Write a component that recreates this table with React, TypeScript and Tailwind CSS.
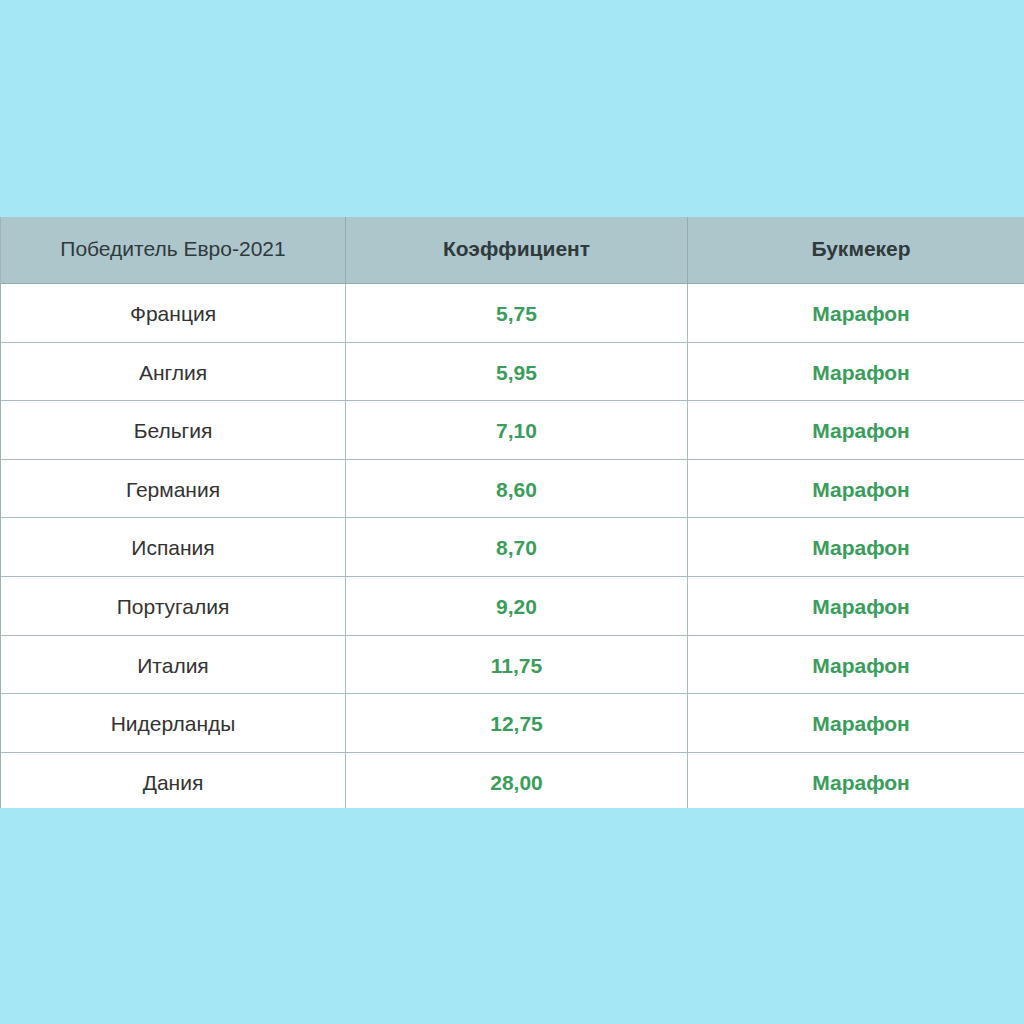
import React from "react";

const rows: [string, string][] = [
  ["Франция", "5,75"],
  ["Англия", "5,95"],
  ["Бельгия", "7,10"],
  ["Германия", "8,60"],
  ["Испания", "8,70"],
  ["Португалия", "9,20"],
  ["Италия", "11,75"],
  ["Нидерланды", "12,75"],
  ["Дания", "28,00"],
];

export default function App() {
  return (
    <div
      className="w-[1024px] h-[1024px] bg-[#a6e7f6] overflow-hidden flex flex-col"
      style={{ fontFamily: '"Liberation Sans", Arial, sans-serif' }}
    >
      <div className="h-[217px] shrink-0" />
      <div className="h-[591px] w-[1034px] overflow-hidden bg-white border-l border-[#9fb3b8]">
        <div className="grid grid-cols-[345px_342px_346px] h-[67px] bg-[#adc6cc] border-b border-[#93aab0] text-[21px] text-[#2f3a3c]">
          <div className="flex items-center justify-center border-r border-[#93aab0] pb-[2px]">Победитель Евро-2021</div>
          <div className="flex items-center justify-center border-r border-[#93aab0] font-bold pb-[2px]">Коэффициент</div>
          <div className="flex items-center justify-center font-bold pb-[2px]">Букмекер</div>
        </div>
        {rows.map(([c, k]) => (
          <div
            key={c}
            className="grid grid-cols-[345px_342px_346px] h-[58.6px] border-b border-[#a9bcc1] text-[21px]"
          >
            <div className="flex items-center justify-center border-r border-[#a9bcc1] text-[#333] pt-[2px]">{c}</div>
            <div className="flex items-center justify-center border-r border-[#a9bcc1] font-bold text-[#3a9d5c] pt-[2px]">{k}</div>
            <div className="flex items-center justify-center font-bold text-[#3a9d5c] pt-[2px]">Марафон</div>
          </div>
        ))}
      </div>
    </div>
  );
}
